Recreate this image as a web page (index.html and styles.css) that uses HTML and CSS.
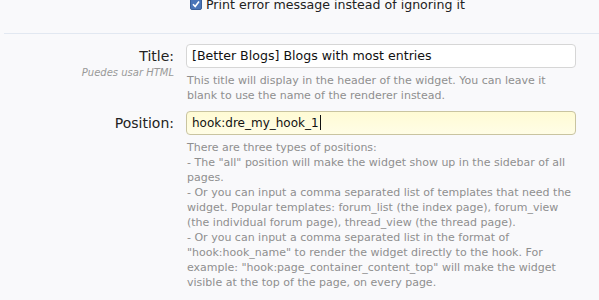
FILE: index.html
```html
<!DOCTYPE html>
<html>
<head>
<meta charset="utf-8">
<link rel="stylesheet" href="styles.css">
</head>
<body>
<div class="page">
  <div class="check-row">
    <span class="checkbox"><svg width="10" height="10" viewBox="0 0 10 10"><path d="M2 5.2 L4.2 7.5 L8 2.5" fill="none" stroke="#fff" stroke-width="1.6"/></svg></span>
    <span class="check-label">Print error message instead of ignoring it</span>
  </div>
  <div class="sep"></div>
  <div class="row">
    <div class="label-col">
      <div class="label">Title:</div>
      <div class="hint">Puedes usar HTML</div>
    </div>
    <div class="field-col">
      <div class="input wide">[Better Blogs] Blogs with most entries</div>
      <div class="desc">This title will display in the header of the widget. You can leave it blank to use the name of the renderer instead.</div>
    </div>
  </div>
  <div class="row row2">
    <div class="label-col">
      <div class="label">Position:</div>
    </div>
    <div class="field-col">
      <div class="input focus">hook:dre_my_hook_1<span class="caret"></span></div>
      <div class="desc">There are three types of positions:<br>- The "all" position will make the widget show up in the sidebar of all pages.<br>- Or you can input a comma separated list of templates that need the widget. Popular templates: forum_list (the index page), forum_view (the individual forum page), thread_view (the thread page).<br>- Or you can input a comma separated list in the format of "hook:hook_name" to render the widget directly to the hook. For example: "hook:page_container_content_top" will make the widget visible at the top of the page, on every page.</div>
    </div>
  </div>
</div>
</body>
</html>
```
FILE: styles.css
```css
html, body {
  margin: 0;
  padding: 0;
  background: #f9f9fb;
}
body {
  font-family: "DejaVu Sans", sans-serif;
  color: #222;
  width: 599px;
  height: 300px;
  overflow: hidden;
}
.page {
  padding-left: 4px;
}
.check-row {
  display: flex;
  align-items: center;
  gap: 4px;
  margin-top: -6px;
  padding-left: 186px;
  height: 20px;
}
.checkbox {
  width: 10px;
  height: 10px;
  border-radius: 2px;
  background: #4a74b8;
  border: 1px solid #3a5f9a;
  display: flex;
  align-items: center;
  justify-content: center;
}
.check-label {
  font-size: 12.6px;
  color: #222;
}
.sep {
  height: 1px;
  background: #e2e8f1;
  margin-top: 19px;
}
.row {
  display: flex;
  margin-top: 10px;
}
.row2 {
  margin-top: 8px;
}
.label-col {
  width: 170px;
  text-align: right;
  padding-top: 3px;
}
.label {
  font-size: 14px;
  color: #222;
  line-height: 18px;
}
.hint {
  font-size: 10px;
  font-style: italic;
  color: #999;
  margin-top: 2px;
}
.field-col {
  margin-left: 12px;
  width: 390px;
}
.input {
  height: 22px;
  border: 1px solid #d6d6d6;
  border-radius: 4px;
  background: #fff;
  font-size: 12px;
  line-height: 22px;
  padding-left: 5px;
  color: #111;
}
.input.wide {
  font-size: 12.6px;
}
.input.focus {
  background: linear-gradient(#fffbd4, #fffde6);
  border-color: #c9c4a0;
}
.caret {
  display: inline-block;
  width: 1px;
  height: 15px;
  background: #111;
  vertical-align: -3px;
  margin-left: 1px;
}
.desc {
  font-size: 11px;
  line-height: 15px;
  color: #8f8f8f;
  margin-top: 5px;
  padding-left: 1px;
}
```
